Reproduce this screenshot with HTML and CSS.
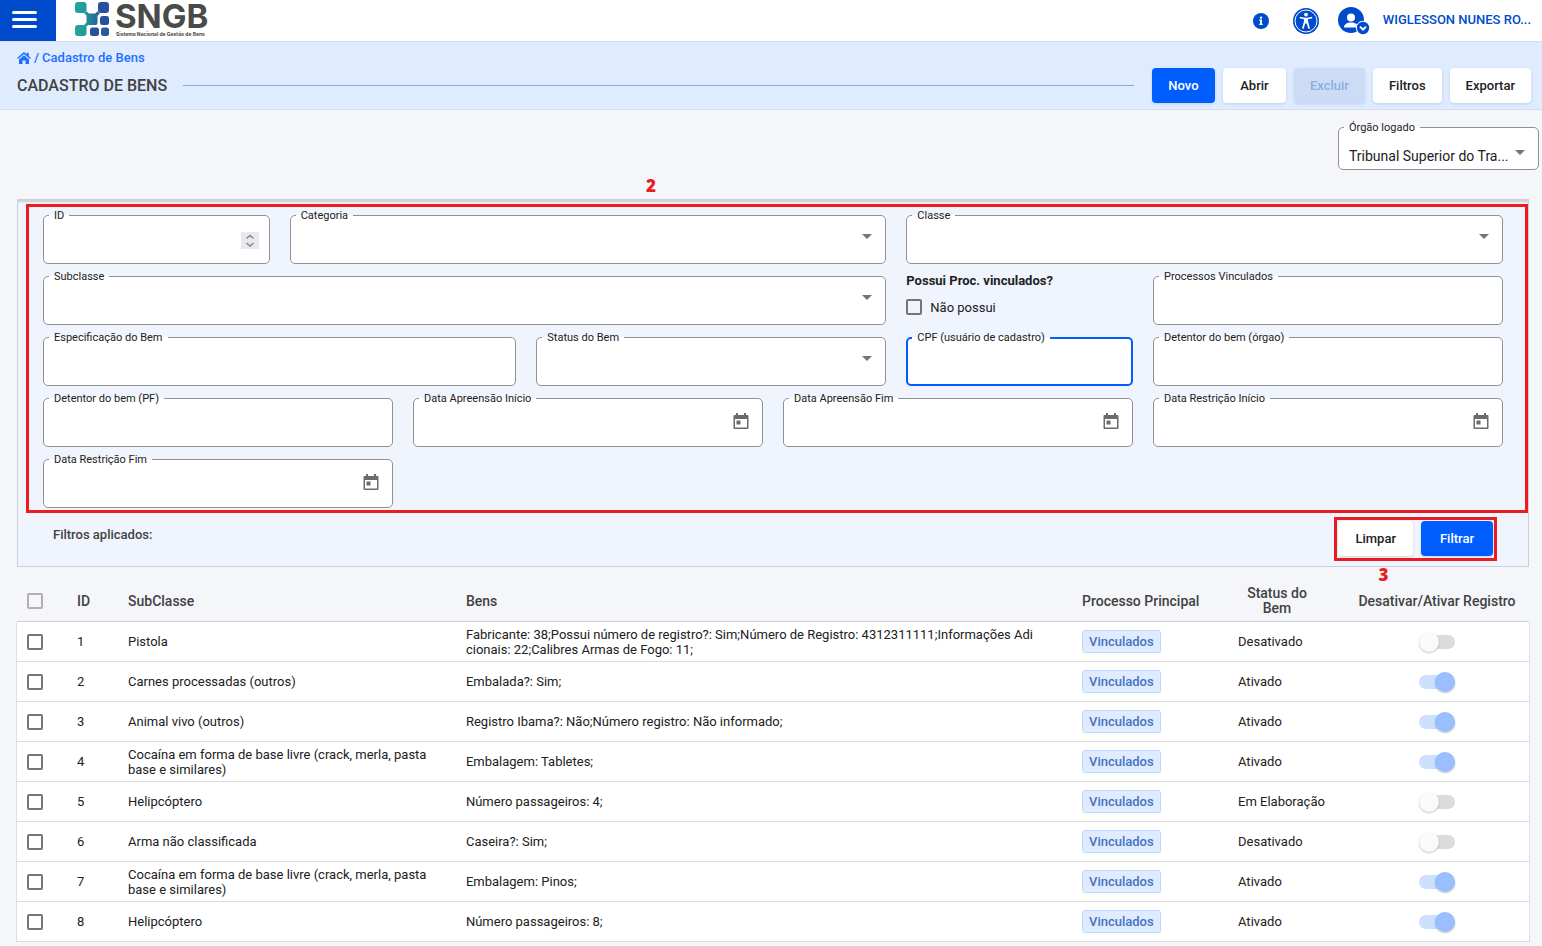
FILE: index.html
```html
<!DOCTYPE html>
<html lang="pt-BR">
<head>
<meta charset="utf-8">
<title>SNGB - Cadastro de Bens</title>
<link rel="stylesheet" href="styles.css">
</head>
<body>
<header class="topbar">
  <button class="menu-btn" type="button" aria-label="Menu"><span></span><span></span><span></span></button>
  <a class="brand" href="#">
    <svg class="brand-mark" viewBox="0 0 34 34" aria-hidden="true">
      <defs>
        <linearGradient id="teal" x1="0" x2="1"><stop offset="0" stop-color="#21a79b"/><stop offset="1" stop-color="#22999d"/></linearGradient>
        <linearGradient id="mid" x1="0" x2="1"><stop offset="0" stop-color="#229a9c"/><stop offset="1" stop-color="#255a9b"/></linearGradient>
      </defs>
      <path d="M9 11q2 0 2-2l3 2.500h6L23 9q0 2 2 2l-2.500 3v7q0 2-2 2H13l-2 2q0-2-2-2l2.500-2.500v-7z" fill="url(#mid)"/>
      <rect x="0" y="0" width="11.500" height="11" rx="3" fill="url(#teal)"/>
      <rect x="23" y="0" width="11" height="11" rx="3" fill="#27509d"/>
      <rect x="25" y="14" width="9" height="9" rx="2.500" fill="#27509d"/>
      <rect x="0" y="23" width="11.500" height="11" rx="3" fill="url(#teal)"/>
      <rect x="15" y="25.500" width="9" height="8.500" rx="2.500" fill="#27509d"/>
      <rect x="26" y="25.500" width="8" height="8.500" rx="2.500" fill="#255a9b"/>
    </svg>
    <span class="brand-text"><strong>SNGB</strong><small>Sistema Nacional de Gestão de Bens</small></span>
  </a>
  <nav class="top-actions">
    <button class="icon-btn info" type="button" aria-label="Informações">
      <svg viewBox="0 0 16 16"><circle cx="8" cy="8" r="8" fill="#004bcb"/><path d="M6.200 6.600H9v4.200h.8V12H6.200v-1.200H7V7.800h-.8z" fill="#fff"/><circle cx="8" cy="4.600" r="1.200" fill="#fff"/></svg>
    </button>
    <button class="icon-btn access" type="button" aria-label="Acessibilidade">
      <svg viewBox="0 0 26 26"><circle cx="13" cy="13" r="13" fill="#004bcb"/><circle cx="13" cy="13" r="11" fill="none" stroke="#fff" stroke-width="1"/><circle cx="13" cy="6.600" r="1.900" fill="#fff"/><path d="M7.500 9.700q5.500 1.600 11 0M11.700 14L10 20M14.300 14l1.700 6" fill="none" stroke="#fff" stroke-width="1.700" stroke-linecap="round"/><path d="M10.900 10h4.200v5.500h-4.200z" fill="#fff"/></svg>
    </button>
    <button class="icon-btn user" type="button" aria-label="Usuário">
      <svg viewBox="0 0 32 28"><circle cx="13" cy="13" r="13" fill="#004bcb"/><circle cx="13" cy="10.500" r="4" fill="#fff"/><path d="M6 20.500c0-3.500 3-5 7-5s7 1.500 7 5z" fill="#fff"/><circle cx="25" cy="21" r="7.200" fill="#fff"/><circle cx="25" cy="21" r="6.200" fill="#004bcb"/><path d="M22 19.600l3 3 3-3" fill="none" stroke="#fff" stroke-width="2"/></svg>
    </button>
    <a class="user-name" href="#">WIGLESSON NUNES RO...</a>
  </nav>
</header>

<section class="page-head">
  <nav class="crumbs">
    <a href="#" aria-label="Início"><svg viewBox="0 0 14 12"><path d="M7 0l2.800 2.300V.8h1.900V4L14 6l-.9 1.100L7 2 .9 7.100 0 6zM7 3.200l5 4.200V12H8.500V8.500h-3V12H2V7.400z" fill="#1f6fff"/></svg></a>
    <span>/</span>
    <a href="#">Cadastro de Bens</a>
  </nav>
  <div class="title-row">
    <h1>CADASTRO DE BENS</h1>
    <hr>
    <div class="buttons">
      <button class="btn primary" type="button">Novo</button>
      <button class="btn" type="button">Abrir</button>
      <button class="btn" type="button" disabled>Excluir</button>
      <button class="btn" type="button">Filtros</button>
      <button class="btn" type="button">Exportar</button>
    </div>
  </div>
</section>

<main>
  <div class="org">
    <div class="field select">
      <label for="orgao">Órgão logado</label>
      <select id="orgao"><option>Tribunal Superior do Tra...</option></select>
    </div>
  </div>

  <form class="panel">
    <div class="filters">
      <span class="mark mark-2">2</span>
      <div class="field w2"><label for="id">ID</label><input id="id" type="text" inputmode="numeric">
        <span class="spin"><svg viewBox="0 0 18 17"><path d="M5.500 6.500L9 3.500l3.500 3M5.500 11L9 14l3.500-3" fill="none" stroke="#85858c" stroke-width="1.400"/></svg></span></div>
      <div class="field select w5"><label for="categoria">Categoria</label><select id="categoria"><option></option></select></div>
      <div class="field select w5"><label for="classe">Classe</label><select id="classe"><option></option></select></div>
      <div class="field select w7"><label for="subclasse">Subclasse</label><select id="subclasse"><option></option></select></div>
      <div class="question w2">
        <strong>Possui Proc. vinculados?</strong>
        <label><input class="check" type="checkbox">Não possui</label>
      </div>
      <div class="field w3"><label for="processos">Processos Vinculados</label><input id="processos" type="text"></div>
      <div class="field w4"><label for="espec">Especificação do Bem</label><input id="espec" type="text"></div>
      <div class="field select w3"><label for="status">Status do Bem</label><select id="status"><option></option></select></div>
      <div class="field active w2"><label for="cpf">CPF (usuário de cadastro)</label><input id="cpf" type="text"></div>
      <div class="field w3"><label for="orgdet">Detentor do bem (órgao)</label><input id="orgdet" type="text"></div>
      <div class="field w3"><label for="pf">Detentor do bem (PF)</label><input id="pf" type="text"></div>
      <div class="field w3"><label for="d1">Data Apreensão Início</label><input id="d1" type="text"><button class="cal" type="button" aria-label="Abrir calendário"><svg viewBox="0 0 16 18"><path d="M3 1h2v2h6V1h2v2h1.500q1 0 1 1v12q0 1-1 1h-13q-1 0-1-1V4q0-1 1-1H3zM2 7v8.500h12V7zM3.500 8.500h4v4h-4z" fill="#6b6b6b" fill-rule="evenodd"/></svg></button></div>
      <div class="field w3"><label for="d2">Data Apreensão Fim</label><input id="d2" type="text"><button class="cal" type="button" aria-label="Abrir calendário"><svg viewBox="0 0 16 18"><path d="M3 1h2v2h6V1h2v2h1.500q1 0 1 1v12q0 1-1 1h-13q-1 0-1-1V4q0-1 1-1H3zM2 7v8.500h12V7zM3.500 8.500h4v4h-4z" fill="#6b6b6b" fill-rule="evenodd"/></svg></button></div>
      <div class="field w3"><label for="d3">Data Restrição Início</label><input id="d3" type="text"><button class="cal" type="button" aria-label="Abrir calendário"><svg viewBox="0 0 16 18"><path d="M3 1h2v2h6V1h2v2h1.500q1 0 1 1v12q0 1-1 1h-13q-1 0-1-1V4q0-1 1-1H3zM2 7v8.500h12V7zM3.500 8.500h4v4h-4z" fill="#6b6b6b" fill-rule="evenodd"/></svg></button></div>
      <div class="field w3"><label for="d4">Data Restrição Fim</label><input id="d4" type="text"><button class="cal" type="button" aria-label="Abrir calendário"><svg viewBox="0 0 16 18"><path d="M3 1h2v2h6V1h2v2h1.500q1 0 1 1v12q0 1-1 1h-13q-1 0-1-1V4q0-1 1-1H3zM2 7v8.500h12V7zM3.500 8.500h4v4h-4z" fill="#6b6b6b" fill-rule="evenodd"/></svg></button></div>
    </div>
    <div class="panel-foot">
      <p>Filtros aplicados:</p>
      <div class="foot-buttons">
        <button class="btn" type="button">Limpar</button>
        <button class="btn primary" type="button">Filtrar</button>
        <span class="mark mark-3">3</span>
      </div>
    </div>
  </form>

  <table class="grid">
    <colgroup><col class="c-check"><col class="c-id"><col class="c-sub"><col><col class="c-proc"><col class="c-status"><col class="c-toggle"></colgroup>
    <thead>
      <tr><th><input class="check" type="checkbox" disabled aria-label="Selecionar todos"></th><th>ID</th><th>SubClasse</th><th>Bens</th><th>Processo Principal</th><th class="th-status">Status do<br>Bem</th><th class="center">Desativar/Ativar Registro</th></tr>
    </thead>
    <tbody>
      <tr><td><input class="check" type="checkbox" aria-label="Selecionar 1"></td><td>1</td><td>Pistola</td><td>Fabricante: 38;Possui número de registro?: Sim;Número de Registro: 4312311111;Informações Adi<br>cionais: 22;Calibres Armas de Fogo: 11;</td><td><a class="tag" href="#">Vinculados</a></td><td>Desativado</td><td class="center"><input class="switch" type="checkbox" role="switch" aria-label="Registro 1"></td></tr>
      <tr><td><input class="check" type="checkbox" aria-label="Selecionar 2"></td><td>2</td><td>Carnes processadas (outros)</td><td>Embalada?: Sim;</td><td><a class="tag" href="#">Vinculados</a></td><td>Ativado</td><td class="center"><input class="switch" type="checkbox" role="switch" checked aria-label="Registro 2"></td></tr>
      <tr><td><input class="check" type="checkbox" aria-label="Selecionar 3"></td><td>3</td><td>Animal vivo (outros)</td><td>Registro Ibama?: Não;Número registro: Não informado;</td><td><a class="tag" href="#">Vinculados</a></td><td>Ativado</td><td class="center"><input class="switch" type="checkbox" role="switch" checked aria-label="Registro 3"></td></tr>
      <tr><td><input class="check" type="checkbox" aria-label="Selecionar 4"></td><td>4</td><td>Cocaína em forma de base livre (crack, merla, pasta<br>base e similares)</td><td>Embalagem: Tabletes;</td><td><a class="tag" href="#">Vinculados</a></td><td>Ativado</td><td class="center"><input class="switch" type="checkbox" role="switch" checked aria-label="Registro 4"></td></tr>
      <tr><td><input class="check" type="checkbox" aria-label="Selecionar 5"></td><td>5</td><td>Helipcóptero</td><td>Número passageiros: 4;</td><td><a class="tag" href="#">Vinculados</a></td><td>Em Elaboração</td><td class="center"><input class="switch" type="checkbox" role="switch" aria-label="Registro 5"></td></tr>
      <tr><td><input class="check" type="checkbox" aria-label="Selecionar 6"></td><td>6</td><td>Arma não classificada</td><td>Caseira?: Sim;</td><td><a class="tag" href="#">Vinculados</a></td><td>Desativado</td><td class="center"><input class="switch" type="checkbox" role="switch" aria-label="Registro 6"></td></tr>
      <tr><td><input class="check" type="checkbox" aria-label="Selecionar 7"></td><td>7</td><td>Cocaína em forma de base livre (crack, merla, pasta<br>base e similares)</td><td>Embalagem: Pinos;</td><td><a class="tag" href="#">Vinculados</a></td><td>Ativado</td><td class="center"><input class="switch" type="checkbox" role="switch" checked aria-label="Registro 7"></td></tr>
      <tr><td><input class="check" type="checkbox" aria-label="Selecionar 8"></td><td>8</td><td>Helipcóptero</td><td>Número passageiros: 8;</td><td><a class="tag" href="#">Vinculados</a></td><td>Ativado</td><td class="center"><input class="switch" type="checkbox" role="switch" checked aria-label="Registro 8"></td></tr>
    </tbody>
  </table>
</main>
</body>
</html>
```
FILE: styles.css
```css
* { box-sizing: border-box; }
body {
  margin: 0;
  background: #f5f6fa;
  color: #212121;
  font-family: Roboto, "Liberation Sans", sans-serif;
  font-size: 14px;
}
button, input, select { font-family: inherit; margin: 0; }
button { cursor: pointer; }
a { text-decoration: none; }
svg { display: block; }

.topbar {
  display: flex;
  align-items: center;
  height: 42px;
  padding-right: 11px;
  background: #fff;
  border-bottom: 1px solid #d5dfee;
}
.menu-btn {
  align-self: stretch;
  display: flex;
  flex-direction: column;
  gap: 4px;
  width: 56px;
  padding: 11px 19px 0 12px;
  border: 0;
  background: #004bcb;
}
.menu-btn span { height: 3px; border-radius: 2px; background: #fff; }
.brand { display: flex; gap: 6px; align-items: center; padding: 0 0 3px 19px; color: #4a4a49; }
.brand-mark { width: 34px; height: 34px; }
.brand-text { display: flex; flex-direction: column; font-family: Inter, sans-serif; }
.brand-text strong { font-size: 33px; line-height: 29px; }
.brand-text small { padding-left: 1px; font-size: 5px; line-height: 6px; font-weight: 700; }
.top-actions { display: flex; align-items: center; margin-left: auto; }
.icon-btn { padding: 0; border: 0; background: none; }
.info { width: 16px; margin-right: 24px; }
.access { width: 26px; margin-right: 19px; }
.user { width: 32px; margin-right: 13px; }
.user-name { color: #004bcb; font-size: 13px; line-height: 15px; font-weight: 500; padding-bottom: 2px; }

.page-head {
  height: 68px;
  padding: 7px 11px 0 17px;
  background: #dfebff;
  border-bottom: 1px solid #d5dfee;
}
.crumbs { display: flex; align-items: center; gap: 3px; height: 17px; font-size: 13px; font-weight: 500; color: #1f6fff; }
.crumbs a { color: #1f6fff; }
.crumbs svg { width: 14px; height: 12px; }
.title-row { display: flex; align-items: center; height: 39px; }
h1 { margin: 0; font-size: 16px; font-weight: 500; color: #424242; }
hr { flex: 1; margin: 0 18px 0 16px; border: 0; border-top: 1px solid #86aae0; }
.buttons { display: flex; gap: 8px; }
.btn {
  min-width: 63px;
  height: 35px;
  padding: 0 16px;
  border: 0;
  border-radius: 4px;
  background: #fff;
  color: #212121;
  font-size: 13px;
  font-weight: 500;
  box-shadow: 0 1px 3px rgba(0, 40, 110, .14);
}
.btn.primary { background: #005eff; color: #fff; }
.btn:disabled { background: #ccdcf5; color: #8cade3; }

main { padding: 17px 13px 0 17px; }
.org { display: flex; justify-content: flex-end; margin: 0 -10px 29px 0; }
.org .field { width: 201px; height: 43px; }

.field {
  position: relative;
  height: 49px;
  border: 1px solid #8f9197;
  border-radius: 5px;
  background: #fff;
}
.field label {
  position: absolute;
  top: -8px;
  left: 5px;
  padding: 0 5px;
  font-size: 11px;
  line-height: 15px;
  background: linear-gradient(transparent 7px, #fff 7px);
  white-space: nowrap;
}
.field input, .field select {
  width: 100%;
  height: 100%;
  padding: 0 30px 0 10px;
  border: 0;
  border-radius: 5px;
  outline: 0;
  background: transparent;
  appearance: none;
  color: #212121;
  font-size: 14px;
}
.org .field select { padding-top: 15px; }
.field.select::after {
  content: "";
  position: absolute;
  top: 18px;
  right: 13px;
  border: 5px solid transparent;
  border-top-color: #757575;
  border-bottom: 0;
  pointer-events: none;
}
.org .field.select::after { top: 22px; }
.field.active { border: 2px solid #005eff; }
.field.active label { top: -9px; left: 4px; }
.spin { position: absolute; top: 16px; right: 10px; width: 18px; background: #e9e9ed; }
.cal { position: absolute; top: 13px; right: 13px; width: 16px; padding: 0; border: 0; background: none; }

.panel {
  padding: 15px 25px 10px;
  background: #eff4fd;
  border: 1px solid #cdcfd8;
  box-shadow: inset 0 3px 2px -1px #cdcfd8;
}
.filters {
  position: relative;
  display: grid;
  grid-template-columns: repeat(12, 1fr);
  gap: 12px 20px;
}
.filters::after, .foot-buttons::after {
  content: "";
  position: absolute;
  inset: -11px -25px -5px -17px;
  border: 3px solid #ea1c20;
  pointer-events: none;
}
.w2 { grid-column: span 2; }
.w3 { grid-column: span 3; }
.w4 { grid-column: span 4; }
.w5 { grid-column: span 5; }
.w7 { grid-column: span 7; }
.question { font-size: 13px; white-space: nowrap; }
.question strong { display: block; line-height: 10px; }
.question label { display: flex; align-items: center; gap: 8px; margin-top: 13px; }
.check {
  display: block;
  width: 16px;
  height: 16px;
  border: 2px solid #757575;
  border-radius: 2px;
  appearance: none;
}
.check:disabled { border-color: #b0b0b0; }
.mark {
  position: absolute;
  color: #ea1c20;
  font: 800 17px/20px "Open Sans", "Noto Sans", sans-serif;
}
.mark-2 { top: -39px; left: 603px; }
.mark-3 { top: 44px; left: 40px; }
.panel-foot { display: flex; justify-content: space-between; padding: 13px 10px 0; }
.panel-foot p { margin: 5px 0 0; font-size: 13px; line-height: 18px; font-weight: 500; color: #424242; }
.foot-buttons { position: relative; display: flex; gap: 8px; }
.foot-buttons::after { inset: -4px -4px -5px -4px; }
.foot-buttons .btn { min-width: 72px; padding: 0 17px; }

.grid {
  width: 100%;
  margin-top: 14px;
  border-collapse: separate;
  border-spacing: 0;
  table-layout: fixed;
  line-height: 15px;
}
.c-check { width: 50px; }
.c-id { width: 51px; }
.c-sub { width: 22.35%; }
.c-proc { width: 156px; }
.c-status { width: 108px; }
.c-toggle { width: 193px; }
th, td { height: 40px; padding: 0 0 0 10px; text-align: left; white-space: nowrap; }
th { height: 41px; border-bottom: 1px solid #cfd1d6; color: #424242; font-size: 14px; font-weight: 500; }
td { background: #fff; border-bottom: 1px solid #dcdcdc; font-size: 13px; }
td:first-child { box-shadow: -1px 0 #dcdfe8; }
td:last-child { box-shadow: 1px 0 #dcdfe8; }
.th-status { padding-right: 20px; text-align: center; }
th.center, td.center { padding-right: 1px; text-align: center; }
.tag {
  display: inline-block;
  padding: 3px 6px;
  border: 1px solid #bfd7ff;
  border-radius: 3px;
  background: #dfebff;
  color: #4573bd;
  font-weight: 500;
}
.switch {
  position: relative;
  display: inline-block;
  vertical-align: middle;
  width: 36px;
  height: 14px;
  border-radius: 7px;
  background: #dbdbdb;
  appearance: none;
}
.switch::before {
  content: "";
  position: absolute;
  top: -3px;
  left: 0;
  width: 20px;
  height: 20px;
  border-radius: 50%;
  background: #fafafa;
  box-shadow: 0 1px 2px rgba(0, 0, 0, .24);
}
.switch:checked { background: #ccdfff; }
.switch:checked::before { left: 16px; background: #99bfff; }
```
